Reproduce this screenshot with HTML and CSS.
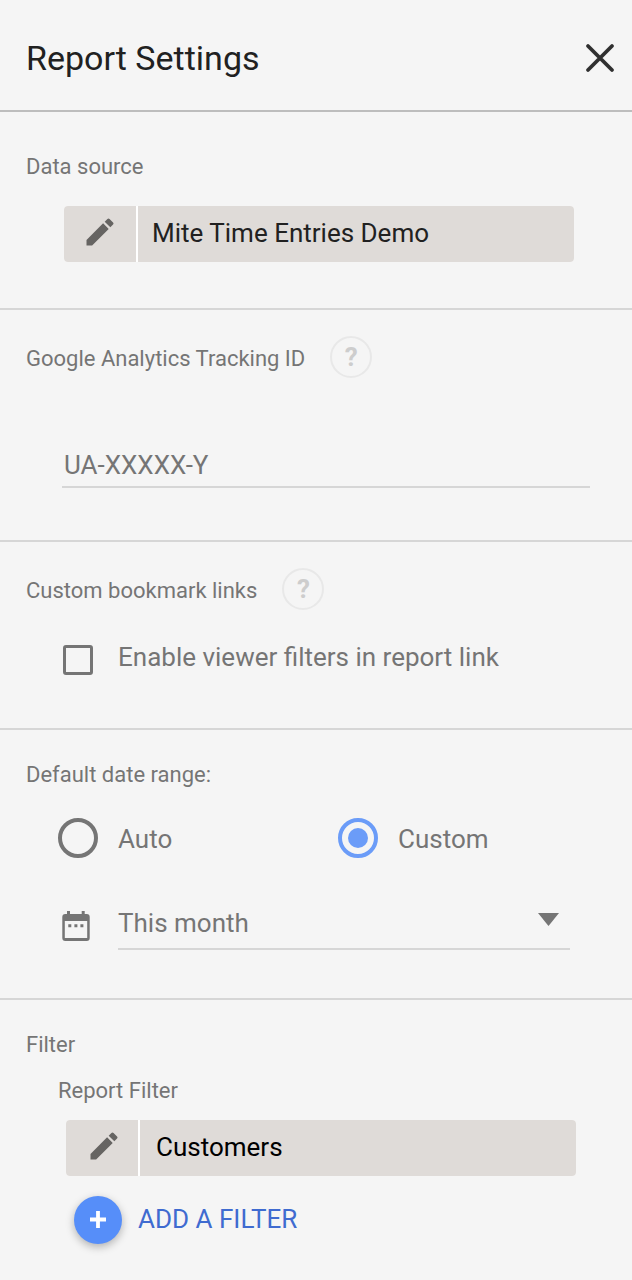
FILE: index.html
```html
<!DOCTYPE html>
<html lang="en">
<head>
<meta charset="utf-8">
<title>Report Settings</title>
<link rel="stylesheet" href="styles.css">
</head>
<body>
<main class="panel">
  <header class="header">
    <h1 class="title">Report Settings</h1>
    <svg class="close" viewBox="0 0 32 32"><path d="M4 4L28 28M28 4L4 28"/></svg>
  </header>

  <section class="section source">
    <h2 class="label">Data source</h2>
    <div class="chip">
      <div class="chip-edit"><svg class="pencil" viewBox="0 0 24 24"><path d="M3 17.25V21h3.75L17.81 9.94l-3.75-3.75L3 17.25zM20.71 7.04a1 1 0 0 0 0-1.41l-2.34-2.34a1 1 0 0 0-1.41 0l-1.83 1.83 3.75 3.75 1.83-1.83z"/></svg></div>
      <div class="chip-name">Mite Time Entries Demo</div>
    </div>
  </section>

  <section class="section tracking">
    <div class="label-row"><h2 class="label">Google Analytics Tracking ID</h2><span class="help">?</span></div>
    <div class="field">UA-XXXXX-Y</div>
  </section>

  <section class="section bookmarks">
    <div class="label-row"><h2 class="label">Custom bookmark links</h2><span class="help">?</span></div>
    <div class="check-row"><span class="checkbox"></span><span class="text enable">Enable viewer filters in report link</span></div>
  </section>

  <section class="section dates">
    <h2 class="label">Default date range:</h2>
    <div class="radios">
      <div class="option"><span class="radio"></span><span class="text">Auto</span></div>
      <div class="option"><span class="radio selected"></span><span class="text">Custom</span></div>
    </div>
    <div class="date-row">
      <svg class="calendar" viewBox="0 0 28 30"><path fill-rule="evenodd" d="M5 0h3v3h11.700V0h3v3h2a3 3 0 0 1 3 3v21a3 3 0 0 1-3 3H3.300a3 3 0 0 1-3-3V6a3 3 0 0 1 3-3H5zM2.800 10v17h22.400V10zM6.300 13.300h3v3h-3zM12.400 13.300h3v3h-3zM18.400 13.300h3v3h-3z"/></svg>
      <div class="select"><span class="text month">This month</span><svg class="arrow" viewBox="0 0 21 13"><path d="M0 0h21L10.500 13z"/></svg></div>
    </div>
  </section>

  <section class="section filters">
    <h2 class="label">Filter</h2>
    <h3 class="label sub">Report Filter</h3>
    <div class="chip filter-chip">
      <div class="chip-edit"><svg class="pencil" viewBox="0 0 24 24"><path d="M3 17.25V21h3.75L17.81 9.94l-3.75-3.75L3 17.25zM20.71 7.04a1 1 0 0 0 0-1.41l-2.34-2.34a1 1 0 0 0-1.41 0l-1.83 1.83 3.75 3.75 1.83-1.83z"/></svg></div>
      <div class="chip-name">Customers</div>
    </div>
    <div class="add-row">
      <span class="fab"><svg class="plus" viewBox="0 0 16 17"><path d="M0 8.500h16M8 0v17"/></svg></span>
      <span class="add">ADD A FILTER</span>
    </div>
  </section>
</main>
</body>
</html>
```
FILE: styles.css
```css
* { box-sizing: border-box; }
body { margin: 0; background: #f5f5f5; font-family: Roboto, sans-serif; }
svg { display: block; flex: none; }
h1, h2, h3 { margin: 0; font-weight: 400; }
.panel { width: 632px; height: 1280px; overflow: hidden; color: #757575; }
.header { display: flex; justify-content: space-between; align-items: center; height: 112px; padding: 6px 16px 0 26px; border-bottom: 2px solid #bdbdbd; }
.title { font-size: 34px; line-height: 40px; color: #212121; }
.close { width: 32px; height: 32px; stroke: #303030; stroke-width: 3.8; stroke-linecap: round; fill: none; }
.section { border-bottom: 2px solid #d6d6d6; }
.label { font-size: 22px; line-height: 26px; white-space: nowrap; }
.text, .field, .chip-name, .add { font-size: 26px; line-height: 30px; white-space: nowrap; }

.source { height: 198px; padding: 42px 0 0 26px; }
.chip { display: flex; gap: 2px; width: 510px; height: 56px; margin: 26px 0 0 38px; border-radius: 4px; overflow: hidden; background: #fff; }
.chip-edit { width: 72px; padding: 8px 0 0 17.5px; background: #dfdbd8; }
.pencil { width: 36px; height: 36px; fill: #666462; }
.chip-name { flex: 1; padding: 12px 0 0 14px; color: #212121; background: #dfdbd8; }

.label-row { display: flex; align-items: center; gap: 25px; height: 42px; }
.label-row .label { padding-top: 4px; }
.help { display: flex; justify-content: center; width: 42px; height: 42px; border: 2px solid #e8e8e8; border-radius: 50%; color: #cdcdcd; font-size: 26px; font-weight: 700; line-height: 38px; }
.tracking { height: 232px; padding: 26px 42px 0 26px; }
.field { height: 38px; margin: 72px 0 0 36px; padding-left: 2px; border-bottom: 2px solid #d6d6d6; }

.bookmarks { height: 188px; padding: 26px 0 0 26px; }
.check-row { display: flex; align-items: flex-start; gap: 25px; margin: 32px 0 0 37px; }
.checkbox { width: 30px; height: 30px; margin-top: 3px; border: 3px solid #757575; border-radius: 3px; }

.dates { height: 270px; padding: 32px 0 0 26px; }
.radios { display: grid; grid-template-columns: 280px 1fr; margin: 30px 0 0 32px; }
.option { display: flex; align-items: center; gap: 20px; height: 40px; }
.option .text { padding-top: 2px; }
.radio { display: grid; place-items: center; width: 40px; height: 40px; border: 4px solid #757575; border-radius: 50%; }
.selected { border-color: #6b9cf8; }
.selected::after { content: ""; width: 20px; height: 20px; border-radius: 50%; background: #6b9cf8; }
.date-row { display: flex; gap: 28px; margin: 50px 0 0 36px; }
.calendar { width: 28px; height: 30px; margin-top: 3px; fill: #757575; }
.select { display: flex; justify-content: space-between; width: 452px; height: 42px; padding-right: 11px; border-bottom: 2px solid #d6d6d6; }
.arrow { width: 21px; height: 13px; margin-top: 5px; fill: #757575; }

.filters { padding: 32px 0 0 26px; border: 0; }
.sub { margin: 20px 0 0 32px; }
.filter-chip { margin: 16px 0 0 40px; }
.filter-chip .chip-edit { padding-left: 19.5px; }
.filter-chip .chip-name { padding-left: 16px; color: #000; }
.add-row { display: flex; align-items: center; gap: 16px; margin: 20px 0 0 48px; }
.fab { display: grid; place-items: center; width: 48px; height: 48px; padding-bottom: 1px; border-radius: 50%; background: #568ef9; box-shadow: 0 3px 8px rgba(0, 0, 0, .28); }
.plus { width: 16px; height: 17px; stroke: #fff; stroke-width: 3.8; fill: none; }
.add { padding-bottom: 2px; color: #3f6bd0; }
```
